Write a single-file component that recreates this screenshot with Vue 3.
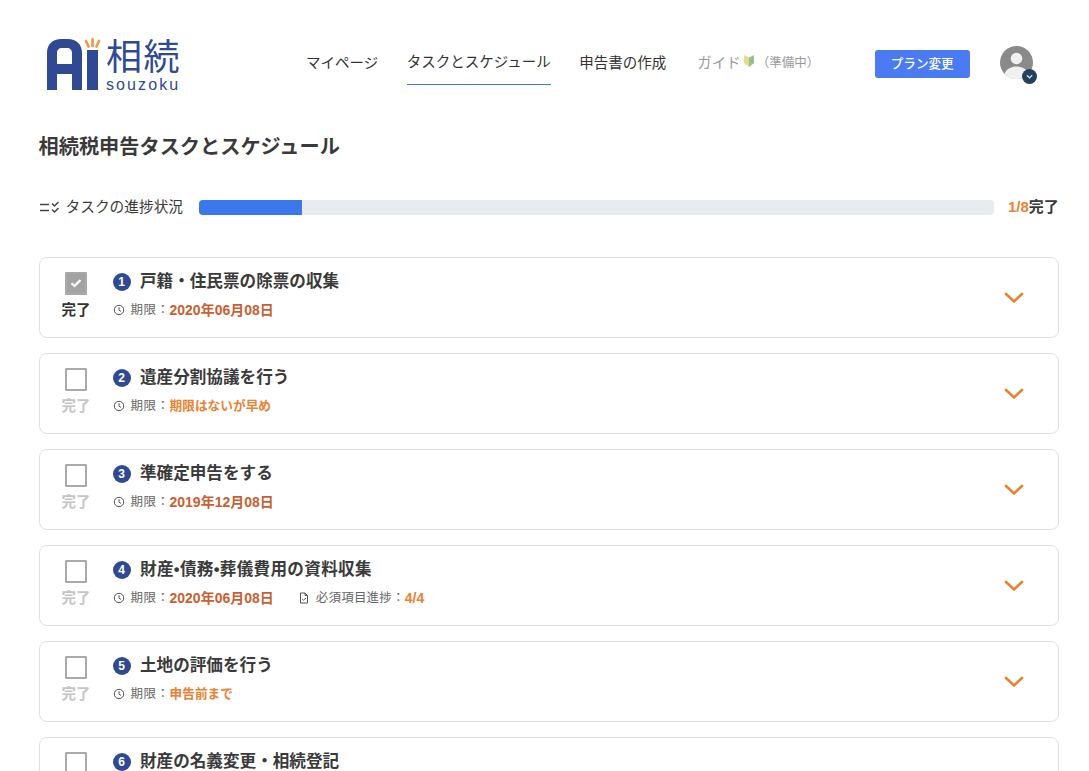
<script setup>
const tasks = [
  { n: 1, title: '戸籍・住民票の除票の収集', deadline: '2020年06月08日', tone: 'dark', done: true },
  { n: 2, title: '遺産分割協議を行う', deadline: '期限はないが早め', tone: 'orange' },
  { n: 3, title: '準確定申告をする', deadline: '2019年12月08日', tone: 'dark' },
  { n: 4, title: '財産•債務•葬儀費用の資料収集', deadline: '2020年06月08日', tone: 'dark', extra: '4/4' },
  { n: 5, title: '土地の評価を行う', deadline: '申告前まで', tone: 'orange' },
  { n: 6, title: '財産の名義変更・相続登記', deadline: '2020年06月08日', tone: 'dark' }
]
</script>

<template>
  <div class="page">
    <header class="header">
      <div class="logo">
        <svg class="logo-mark" width="60" height="54" viewBox="0 0 60 54" aria-hidden="true">
          <path fill="#2f4a93" fill-rule="evenodd" d="M1 53V16C1 7 7 2 15 2h7c8 0 14 5 14 14v37H26V37H11v16zM11 27h15V16c0-3-2-5-5-5h-5c-3 0-5 2-5 5z" />
          <rect x="41" y="13" width="11" height="40" fill="#2f4a93" />
          <g stroke="#ee9d4d" stroke-width="2.800" stroke-linecap="round">
            <path d="M46.500 2.500V9" />
            <path d="M40 4L42.500 9.500" />
            <path d="M53 4L50.500 9.500" />
          </g>
        </svg>
        <div class="logo-text">
          <span class="logo-ja">相続</span>
          <span class="logo-en">souzoku</span>
        </div>
      </div>
      <nav class="nav">
        <a class="nav-item">マイページ</a>
        <a class="nav-item active">タスクとスケジュール</a>
        <a class="nav-item">申告書の作成</a>
        <a class="nav-item muted">
          ガイド
          <svg class="leaf" width="14" height="14" viewBox="0 0 14 14" aria-hidden="true">
            <path fill="#e9dc84" d="M7 3.500L2 1v8l5 4z" />
            <path fill="#8fc48e" d="M7 3.500L12 1v8l-5 4z" />
          </svg>
          <small>（準備中）</small>
        </a>
      </nav>
      <button class="plan">プラン変更</button>
      <div class="avatar">
        <svg width="33" height="33" viewBox="0 0 33 33" aria-hidden="true">
          <circle cx="16.500" cy="16.500" r="16.500" fill="#8a8a8a" />
          <circle cx="16.500" cy="12.500" r="5.800" fill="#f1f1f1" />
          <path fill="#f1f1f1" d="M4.500 28c2-5.500 7-7.500 12-7.500s10 2 12 7.500a16.500 16.500 0 0 1-24 0z" />
        </svg>
        <span class="avatar-badge">
          <svg width="9" height="9" viewBox="0 0 9 9" aria-hidden="true">
            <path d="M1.800 3.200L4.500 5.800L7.200 3.200" fill="none" stroke="#d8dee4" stroke-width="1.200" />
          </svg>
        </span>
      </div>
    </header>

    <main class="main">
      <h1 class="title">相続税申告タスクとスケジュール</h1>

      <div class="progress">
        <svg class="progress-icon" width="21" height="14" viewBox="0 0 21 14" aria-hidden="true">
          <g fill="none" stroke="#444" stroke-width="1.500">
            <path d="M1 4.500h9M1 10.500h9" />
            <path d="M13 3.500l2.500 2.500l4-4M13 9.500l2.500 2.500l4-4" />
          </g>
        </svg>
        <span class="progress-label">タスクの進捗状況</span>
        <div class="bar"><div class="bar-fill"></div></div>
        <span class="progress-count"><b>1/8</b>完了</span>
      </div>

      <section class="list">
        <article v-for="t in tasks" :key="t.n" class="card">
          <div class="status" :class="{ done: t.done }">
            <span class="box">
              <svg v-if="t.done" width="14" height="12" viewBox="0 0 14 12" aria-hidden="true">
                <path d="M2.500 6.200L5.500 9L11.500 3" fill="none" stroke="#fff" stroke-width="2.200" />
              </svg>
            </span>
            <span class="status-label">完了</span>
          </div>
          <div class="body">
            <div class="task-title">
              <span class="num">{{ t.n }}</span>
              <span :class="{ wide: t.extra }">{{ t.title }}</span>
            </div>
            <div class="meta">
              <svg class="meta-icon" width="12" height="12" viewBox="0 0 12 12" aria-hidden="true">
                <circle cx="6" cy="6" r="4.700" fill="none" stroke="#555" stroke-width="1" />
                <path d="M6 3.200V6.200L8 7.500" fill="none" stroke="#555" stroke-width="1" />
              </svg>
              <span class="meta-label first">期限：</span>
              <b :class="t.tone">{{ t.deadline }}</b>
              <template v-if="t.extra">
                <svg class="meta-icon doc" width="12" height="12" viewBox="0 0 12 12" aria-hidden="true">
                  <path d="M2.500 1h4.500l2.500 2.500V11h-7zM7 1v2.500h2.500" fill="none" stroke="#555" stroke-width="1" />
                  <path d="M4.200 7l1.300 1.300L7.800 6" fill="none" stroke="#555" stroke-width="1" />
                </svg>
                <span class="meta-label">必須項目進捗：</span>
                <b class="count">{{ t.extra }}</b>
              </template>
            </div>
          </div>
          <svg class="chevron" width="20" height="12" viewBox="0 0 20 12" aria-hidden="true">
            <path d="M2 2L10 9.500L18 2" fill="none" stroke="#e98232" stroke-width="2.600" stroke-linecap="round" stroke-linejoin="round" />
          </svg>
        </article>
      </section>
    </main>
  </div>
</template>

<style>
html, body { margin: 0; background: #fff; overflow: hidden; }
</style>

<style scoped>
.page {
  width: 1089px;
  height: 771px;
  overflow: hidden;
  box-sizing: border-box;
  font-family: "Liberation Sans", "Noto Sans CJK JP", sans-serif;
  color: #3a3a3a;
}
.header {
  display: flex;
  align-items: flex-start;
  height: 130px;
  padding: 37px 0 0 46px;
  box-sizing: border-box;
}
.logo { display: flex; align-items: flex-start; width: 260px; }
.logo-mark { display: block; flex: none; }
.logo-text { display: flex; flex-direction: column; }
.logo-ja { font-size: 36px; line-height: 41px; color: #2f4a93; letter-spacing: 1.500px; white-space: nowrap; }
.logo-en { font-size: 16px; line-height: 14px; letter-spacing: 2.100px; color: #2f4a93; }
.nav { display: flex; gap: 28.500px; align-items: flex-start; }
.nav-item {
  display: flex;
  align-items: center;
  height: 48px;
  padding-bottom: 0;
  font-size: 14.500px;
  box-sizing: border-box;
  color: #333;
}
.nav-item.active { border-bottom: 1.500px solid #3674e8; }
.nav-item.muted { color: #9a9a9a; margin-left: 2.500px; }
.leaf { margin: 0 1px; }
.nav-item small { font-size: 12.500px; }
.plan {
  margin: 13px 0 0 55.500px;
  width: 95px;
  height: 28px;
  border: 0;
  padding: 0 0 3px;
  border-radius: 3px;
  background: #4a7bf2;
  color: #fff;
  font: 500 12.600px "Noto Sans CJK JP", sans-serif;
}
.avatar { position: relative; width: 33px; height: 33px; margin: 9px 0 0 30px; }
.avatar svg { display: block; }
.avatar-badge {
  position: absolute;
  right: -4px;
  bottom: -5px;
  width: 15px;
  height: 15px;
  border-radius: 50%;
  background: #23405c;
  display: flex;
  align-items: center;
  justify-content: center;
}
.main { padding: 0 30px 0 38.500px; }
.title { margin: 1px 0 0; font-size: 20.200px; line-height: 32px; font-weight: 700; color: #3a3a3a; }
.progress { display: flex; align-items: center; margin-top: 33px; height: 22px; }
.progress-icon { flex: none; }
.progress-label { margin-left: 6px; padding-bottom: 3px; font-size: 14.700px; color: #3a3a3a; width: 118px; white-space: nowrap; }
.bar { flex: 1; height: 15px; margin-left: 15px; background: #e8ecf0; border-radius: 4px; overflow: hidden; }
.bar-fill { width: 13%; height: 100%; background: #3a78ec; }
.progress-count { margin-left: 14px; padding-bottom: 3px; font-size: 15px; font-weight: 700; width: 51px; white-space: nowrap; }
.progress-count b { color: #e98232; }
.list { display: flex; flex-direction: column; gap: 15px; margin-top: 39px; }
.card {
  display: flex;
  align-items: flex-start;
  height: 81px;
  box-sizing: border-box;
  border: 1px solid #dfdfdf;
  border-radius: 8px;
  flex: none;
}
.status { width: 73px; display: flex; flex-direction: column; align-items: center; padding-top: 14px; flex: none; }
.box {
  width: 22.500px;
  height: 22.500px;
  box-sizing: border-box;
  border: 2px solid #a9a9a9;
  border-radius: 1px;
  display: flex;
  align-items: center;
  justify-content: center;
}
.status-label { margin-top: 5px; font-size: 14.500px; line-height: 21px; font-weight: 700; color: #c4c4c4; }
.done .box { background: #a3a3a3; }
.done .status-label { color: #333; }
.body { flex: 1; padding-top: 11px; }
.task-title { display: flex; align-items: center; font-size: 16.600px; line-height: 26px; font-weight: 700; color: #3a3a3a; white-space: nowrap; }
.wide { letter-spacing: 0.300px; }
.num {
  width: 18px;
  height: 18px;
  margin-right: 9.500px;
  border-radius: 50%;
  background: #2f4a93;
  color: #fff;
  font: 700 12px/18px "Liberation Sans", sans-serif;
  text-align: center;
}
.meta { display: flex; align-items: center; margin-top: 5px; font-size: 12.500px; letter-spacing: 0.200px; line-height: 20px; color: #666; white-space: nowrap; }
.meta-label.first { letter-spacing: 0.500px; }
.meta-icon { margin-right: 6px; flex: none; }
.meta-icon.doc { margin-left: 24px; }
.meta b { font-weight: 700; letter-spacing: 0; }
.meta b.dark { font-size: 14px; color: #c95f32; }
.meta b.orange { font-size: 12.700px; color: #e98232; }
.meta b.count { font-size: 14px; color: #e98232; }
.chevron { margin: 34px 34px 0 0; flex: none; }
</style>
